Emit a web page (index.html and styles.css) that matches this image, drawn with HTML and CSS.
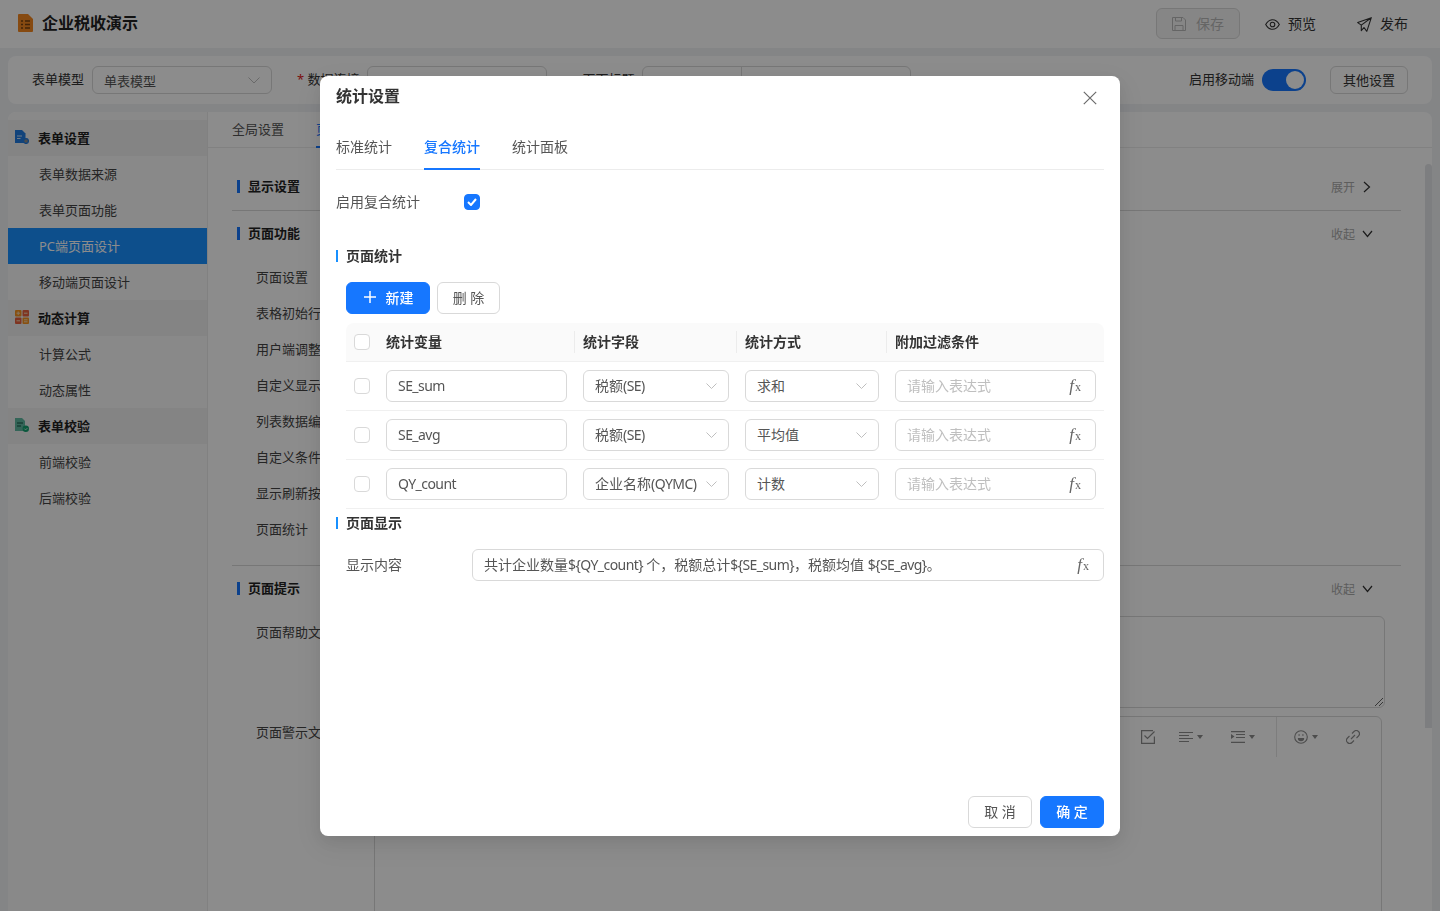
FILE: index.html
```html
<!DOCTYPE html>
<html lang="zh">
<head>
  <meta charset="UTF-8">
  <meta name="viewport" content="width=device-width, initial-scale=1.0">
  <title>企业税收演示</title>
  <link rel="stylesheet" href="styles.css">
</head>
<body>
  <header class="top-header">
    <div class="brand">
      <svg class="brand-icon" width="15" height="18" viewBox="0 0 15 18"><path d="M1 0h9l5 5v12a1 1 0 0 1-1 1H1a1 1 0 0 1-1-1V1a1 1 0 0 1 1-1z" fill="#f5871f"/><path d="M3 7h2M7 7h5M3 10.500h2M7 10.500h5M3 14h2M7 14h5" stroke="#7a430f" stroke-width="1.300"/></svg>
      <span>企业税收演示</span>
    </div>
    <div class="header-actions">
      <button class="save-btn" type="button">
        <svg width="14" height="14" viewBox="0 0 14 14" fill="none" stroke="currentColor" stroke-width="1"><path d="M.5.500h10.500l2.500 2.500v10.500H.5z"/><path d="M3.500.500v3.500h6V.500M3 13.500V8.500h8v5"/></svg>
        保存
      </button>
      <a class="header-link link-preview">
        <svg width="15" height="11" viewBox="0 0 15 11" fill="none" stroke="currentColor" stroke-width="1.100"><path d="M.7 5.500C2.500 2.200 4.800.7 7.500.7s5 1.500 6.800 4.800c-1.800 3.300-4.100 4.800-6.800 4.800S2.500 8.800.7 5.500z"/><circle cx="7.500" cy="5.500" r="2.300"/></svg>
        预览
      </a>
      <a class="header-link link-publish">
        <svg width="15" height="15" viewBox="0 0 15 15" fill="none" stroke="currentColor" stroke-width="1.100" stroke-linejoin="round"><path d="M14.300.7.700 5.600l3.600 2.500L14.300.7 9.800 14.300 7 10.500l-2.700 3.200V8.100"/></svg>
        发布
      </a>
    </div>
  </header>

  <div class="config-bar">
    <label class="bar-label">表单模型</label>
    <div class="bar-select select-model">单表模型<svg class="chev" width="12" height="7" viewBox="0 0 12 7"><path d="M.5.500 6 6 11.500.500" fill="none" stroke="currentColor"/></svg></div>
    <label class="bar-label label-conn"><i>*</i> 数据连接</label>
    <div class="bar-select select-conn"></div>
    <label class="bar-label label-title">页面标题</label>
    <div class="bar-select select-title-a"></div>
    <div class="bar-select select-title-b"></div>
    <div class="bar-right">
      <label class="bar-label">启用移动端</label>
      <span class="switch"><span class="knob"></span></span>
      <button class="other-btn" type="button">其他设置</button>
    </div>
  </div>

  <div class="workspace">
    <aside class="side-menu">
      <div class="menu-group">
        <svg width="14" height="14" viewBox="0 0 14 14"><path d="M0 0h7l3.500 3.500V13H0z" fill="#1f7ae0"/><path d="M2 6h5M2 8.500h3.500" stroke="#cfe2f7" stroke-width="1"/><circle cx="11" cy="11" r="2.400" fill="#8a8a8a" stroke="#1f7ae0" stroke-width="1.300"/></svg>
        表单设置
      </div>
      <div class="menu-item">表单数据来源</div>
      <div class="menu-item">表单页面功能</div>
      <div class="menu-item active">PC端页面设计</div>
      <div class="menu-item">移动端页面设计</div>
      <div class="menu-group">
        <svg width="14" height="14" viewBox="0 0 14 14"><rect width="6.500" height="6.500" rx="1" fill="#f7931e"/><rect x="7.500" width="6.500" height="6.500" rx="1" fill="#e8603c"/><rect y="7.500" width="6.500" height="6.500" rx="1" fill="#e8603c"/><rect x="7.500" y="7.500" width="6.500" height="6.500" rx="1" fill="#f7931e"/><path d="M1.500 3.200h3.500M3.200 1.500V5M9 3.200h3.500M1.500 10.800h3.500M9 9.800h3.500M9 11.800h3.500" stroke="#f3d9b5"/></svg>
        动态计算
      </div>
      <div class="menu-item">计算公式</div>
      <div class="menu-item">动态属性</div>
      <div class="menu-group">
        <svg width="14" height="14" viewBox="0 0 14 14"><path d="M0 0h7l3 3v10H0z" fill="#5fb8a0"/><path d="M2 5h6M2 8h4" stroke="#14503f" stroke-width="1"/><circle cx="10.800" cy="10.800" r="3.200" fill="#14a06f"/><path d="M9.300 10.600l1.300 1.300 1.800-1.800" fill="none" stroke="#bfe8d8"/></svg>
        表单校验
      </div>
      <div class="menu-item">前端校验</div>
      <div class="menu-item">后端校验</div>
    </aside>

    <main class="main-panel">
      <nav class="panel-tabs">
        <span class="panel-tab">全局设置</span>
        <span class="panel-tab current">页面设置</span>
      </nav>
      <div class="panel-scroll">
        <div class="panel-body">
          <section class="cfg-section">
            <div class="cfg-head">
              <span class="cfg-title">显示设置</span>
              <span class="cfg-toggle">展开<svg width="8" height="12" viewBox="0 0 8 12"><path d="M1 1l5.500 5L1 11" fill="none" stroke="currentColor" stroke-width="1.200"/></svg></span>
            </div>
          </section>
          <section class="cfg-section">
            <div class="cfg-head">
              <span class="cfg-title">页面功能</span>
              <span class="cfg-toggle open">收起<svg width="11" height="8" viewBox="0 0 11 8"><path d="M1 1l4.500 5.500L10 1" fill="none" stroke="currentColor" stroke-width="1.200"/></svg></span>
            </div>
            <div class="cfg-rows">
              <div class="cfg-row">页面设置</div>
              <div class="cfg-row">表格初始行</div>
              <div class="cfg-row">用户端调整</div>
              <div class="cfg-row">自定义显示</div>
              <div class="cfg-row">列表数据编</div>
              <div class="cfg-row">自定义条件</div>
              <div class="cfg-row">显示刷新按</div>
              <div class="cfg-row">页面统计</div>
            </div>
          </section>
          <section class="cfg-section last">
            <div class="cfg-head">
              <span class="cfg-title">页面提示</span>
              <span class="cfg-toggle open">收起<svg width="11" height="8" viewBox="0 0 11 8"><path d="M1 1l4.500 5.500L10 1" fill="none" stroke="currentColor" stroke-width="1.200"/></svg></span>
            </div>
            <div class="tip-row">
              <span class="tip-label">页面帮助文</span>
              <div class="tip-area">
                <svg class="resize-grip" width="8" height="8" viewBox="0 0 8 8"><path d="M0 8l8-8M4 8l4-4" stroke="#3c3c3c" stroke-width=".8"/></svg>
              </div>
            </div>
            <div class="tip-row">
              <span class="tip-label">页面警示文</span>
              <div class="editor">
                <div class="editor-tools">
                  <svg class="tool-check" width="14" height="14" viewBox="0 0 14 14" fill="none" stroke="currentColor" stroke-width="1.200"><path d="M13.400 6.500v6.900H.6V.6H12"/><path d="M3.500 5.500 6.500 8.500 13.500 1.500"/></svg>
                  <span class="tool">
                    <svg width="14" height="11" viewBox="0 0 14 11" stroke="currentColor"><path d="M0 .5h14M0 3.500h10M0 6.500h14M0 9.500h10"/></svg>
                    <i class="caret"></i>
                  </span>
                  <span class="tool">
                    <svg width="14" height="12" viewBox="0 0 14 12" stroke="currentColor" stroke-width="1.200"><path d="M0 .6h14M5 3.500h9M5 6.500h9M0 11.400h14"/><path d="M0 3l3.500 2.500L0 8z" fill="currentColor" stroke="none"/></svg>
                    <i class="caret"></i>
                  </span>
                  <span class="tool-sep"></span>
                  <span class="tool">
                    <svg width="14" height="14" viewBox="0 0 14 14" fill="none" stroke="currentColor" stroke-width="1.100"><circle cx="7" cy="7" r="6.300"/><path d="M3.800 8h6.400a3.200 3.200 0 0 1-6.400 0z" fill="currentColor" stroke="none"/><path d="M4.500 5h1.200M8.300 5h1.200" stroke-width="1.500"/></svg>
                    <i class="caret"></i>
                  </span>
                  <svg class="tool-link" width="14" height="14" viewBox="0 0 14 14" fill="none" stroke="currentColor" stroke-width="1.100"><path d="M6 3.500 8 1.500a2.600 2.600 0 0 1 4.500 4.500l-2 2M8 10.500l-2 2A2.600 2.600 0 0 1 1.500 8l2-2M5 9l4-4"/></svg>
                </div>
              </div>
            </div>
          </section>
        </div>
        <div class="scroll-track"><div class="scroll-thumb"></div></div>
      </div>
    </main>
  </div>

  <div class="mask">
    <div class="modal">
      <div class="modal-head">
        <h3>统计设置</h3>
        <svg class="modal-close" width="14" height="14" viewBox="0 0 14 14"><path d="M.8.8l12.400 12.400M13.200.8.800 13.200" stroke="#6b6b6b" stroke-width="1.200"/></svg>
      </div>
      <div class="modal-tabs">
        <span class="modal-tab">标准统计</span>
        <span class="modal-tab on">复合统计</span>
        <span class="modal-tab">统计面板</span>
      </div>
      <div class="enable-row">
        <span class="enable-label">启用复合统计</span>
        <span class="check on"><svg width="10" height="8" viewBox="0 0 10 8"><path d="M1 4l3 3 5-6" fill="none" stroke="#fff" stroke-width="2"/></svg></span>
      </div>
      <div class="sub-title sub-stat">页面统计</div>
      <div class="table-actions">
        <button class="btn primary new-btn" type="button">
          <svg width="12" height="12" viewBox="0 0 12 12"><path d="M6 0v12M0 6h12" stroke="#fff" stroke-width="1.500"/></svg>
          新建
        </button>
        <button class="btn del-btn" type="button">删 除</button>
      </div>
      <div class="stat-table">
        <div class="stat-row stat-headrow">
          <div class="cell"><span class="check"></span></div>
          <div class="cell head-cell">统计变量</div>
          <div class="cell head-cell">统计字段</div>
          <div class="cell head-cell">统计方式</div>
          <div class="cell head-cell">附加过滤条件</div>
        </div>
        <div class="stat-row">
          <div class="cell"><span class="check"></span></div>
          <div class="cell"><div class="field en">SE_sum</div></div>
          <div class="cell"><div class="field"><span>税额<span class="en">(SE)</span></span><svg class="arrow" width="11" height="6" viewBox="0 0 11 6"><path d="M.5.500l5 5 5-5" fill="none" stroke="#bfbfbf"/></svg></div></div>
          <div class="cell"><div class="field">求和<svg class="arrow" width="11" height="6" viewBox="0 0 11 6"><path d="M.5.500l5 5 5-5" fill="none" stroke="#bfbfbf"/></svg></div></div>
          <div class="cell"><div class="field holder">请输入表达式<span class="fx"><i>f</i>x</span></div></div>
        </div>
        <div class="stat-row">
          <div class="cell"><span class="check"></span></div>
          <div class="cell"><div class="field en">SE_avg</div></div>
          <div class="cell"><div class="field"><span>税额<span class="en">(SE)</span></span><svg class="arrow" width="11" height="6" viewBox="0 0 11 6"><path d="M.5.500l5 5 5-5" fill="none" stroke="#bfbfbf"/></svg></div></div>
          <div class="cell"><div class="field">平均值<svg class="arrow" width="11" height="6" viewBox="0 0 11 6"><path d="M.5.500l5 5 5-5" fill="none" stroke="#bfbfbf"/></svg></div></div>
          <div class="cell"><div class="field holder">请输入表达式<span class="fx"><i>f</i>x</span></div></div>
        </div>
        <div class="stat-row">
          <div class="cell"><span class="check"></span></div>
          <div class="cell"><div class="field en">QY_count</div></div>
          <div class="cell"><div class="field"><span>企业名称<span class="en">(QYMC)</span></span><svg class="arrow" width="11" height="6" viewBox="0 0 11 6"><path d="M.5.500l5 5 5-5" fill="none" stroke="#bfbfbf"/></svg></div></div>
          <div class="cell"><div class="field">计数<svg class="arrow" width="11" height="6" viewBox="0 0 11 6"><path d="M.5.500l5 5 5-5" fill="none" stroke="#bfbfbf"/></svg></div></div>
          <div class="cell"><div class="field holder">请输入表达式<span class="fx"><i>f</i>x</span></div></div>
        </div>
      </div>
      <div class="sub-title sub-show">页面显示</div>
      <div class="show-row">
        <span class="show-label">显示内容</span>
        <div class="field show-field"><span>共计企业数量<span class="en">${QY_count} </span>个，税额总计<span class="en">${SE_sum}</span>，税额均值 <span class="en">${SE_avg}</span>。</span><span class="fx"><i>f</i>x</span></div>
      </div>
      <div class="modal-foot">
        <button class="btn foot-btn" type="button">取 消</button>
        <button class="btn primary foot-btn" type="button">确 定</button>
      </div>
    </div>
  </div>
</body>
</html>
```

FILE: styles.css
```css
* {
  box-sizing: border-box;
}
html, body {
  height: 100%;
}
body {
  margin: 0;
  height: 911px;
  overflow: hidden;
  display: flex;
  flex-direction: column;
  background: #f0f2f5;
  color: #333;
  font-family: "Noto Sans", "Noto Sans CJK SC", sans-serif;
  font-size: 13px;
}
button {
  font-family: inherit;
}
.en {
  letter-spacing: -0.55px;
}

/* header */
.top-header {
  height: 48px;
  flex: none;
  background: #fff;
  display: flex;
  align-items: center;
  justify-content: space-between;
  padding: 0 32px 0 18px;
}
.brand {
  display: flex;
  align-items: center;
  gap: 9px;
  padding-bottom: 2px;
  font-size: 16px;
  font-weight: 700;
  color: #222;
}
.brand span {
  margin-bottom: 2px;
}
.header-actions {
  display: flex;
  align-items: center;
}
.save-btn {
  width: 84px;
  height: 31px;
  margin-top: -1px;
  padding: 0 0 1px;
  display: flex;
  align-items: center;
  justify-content: center;
  gap: 10px;
  border: 1px solid #d9d9d9;
  border-radius: 6px;
  background: #f5f5f5;
  color: #b8b8b8;
  font-size: 14px;
}
.save-btn svg {
  margin-top: 1px;
}
.header-link {
  display: flex;
  align-items: center;
  gap: 8px;
  padding-bottom: 2px;
  font-size: 14px;
  color: #333;
}
.header-link svg {
  margin-top: 2px;
}
.link-preview {
  margin-left: 25px;
}
.link-publish {
  margin-left: 41px;
}

/* top config bar */
.config-bar {
  height: 48px;
  flex: none;
  margin: 8px 8px 0;
  padding: 0 24px;
  background: #fff;
  border-radius: 8px;
  display: flex;
  align-items: center;
}
.bar-label {
  color: #333;
  line-height: 26px;
  padding-bottom: 2px;
}
.bar-label i {
  color: #e02020;
  font-style: normal;
}
.label-conn {
  margin-left: 25px;
}
.label-title {
  margin-left: 36px;
}
.bar-select {
  height: 28px;
  width: 180px;
  margin-left: 8px;
  padding: 0 11px;
  border: 1px solid #d9d9d9;
  border-radius: 6px;
  display: flex;
  align-items: center;
  justify-content: space-between;
  color: #555;
}
.select-conn {
  margin-left: 7px;
}
.select-title-a {
  width: 100px;
  margin-left: 7px;
  border-radius: 6px 0 0 6px;
}
.select-title-b {
  width: 170px;
  margin-left: -1px;
  border-radius: 0 6px 6px 0;
}
.chev {
  color: #bfbfbf;
}
.bar-right {
  margin-left: auto;
  display: flex;
  align-items: center;
}
.switch {
  width: 44px;
  height: 22px;
  margin-left: 8px;
  padding: 2px;
  border-radius: 11px;
  background: #1677ff;
  display: flex;
  justify-content: flex-end;
}
.knob {
  width: 18px;
  height: 18px;
  border-radius: 50%;
  background: #fff;
}
.other-btn {
  width: 78px;
  height: 28px;
  margin-left: 24px;
  border: 1px solid #d9d9d9;
  border-radius: 6px;
  background: #fff;
  color: #333;
  font-size: 13px;
  padding: 0 0 2px;
}

/* main area */
.workspace {
  flex: 1;
  min-height: 0;
  margin: 8px 8px 0;
  background: #fff;
  border-radius: 8px 8px 0 0;
  display: flex;
  overflow: hidden;
}
.side-menu {
  width: 200px;
  flex: none;
  padding-top: 8px;
  background: #fafafa;
  border-right: 1px solid #ececec;
}
.menu-group {
  height: 36px;
  padding: 0 0 2px 7px;
  background: #f0f0f0;
  display: flex;
  align-items: center;
  gap: 9px;
  font-weight: 700;
  color: #222;
}
.menu-item {
  height: 36px;
  padding-left: 31px;
  line-height: 36px;
  color: #444;
}
.menu-item.active {
  background: #1890ff;
  color: #fff;
}
.main-panel {
  flex: 1;
  min-width: 0;
  display: flex;
  flex-direction: column;
}
.panel-tabs {
  height: 36px;
  flex: none;
  padding-left: 24px;
  border-bottom: 1px solid #ececec;
  display: flex;
  gap: 32px;
}
.panel-tab {
  line-height: 35px;
  color: #555;
}
.panel-tab.current {
  color: #1677ff;
  border-bottom: 2px solid #1677ff;
  height: 36px;
}
.panel-scroll {
  flex: 1;
  min-height: 0;
  display: flex;
}
.panel-body {
  flex: 1;
  min-width: 0;
  padding: 15px 24px 0;
}
.scroll-track {
  width: 7px;
  flex: none;
  padding-top: 16px;
}
.scroll-thumb {
  height: 564px;
  border-radius: 4px 4px 0 0;
  background: #e4e5e9;
}
.cfg-section {
  border-bottom: 1px solid #d9d9d9;
}
.cfg-section.last {
  border-bottom: none;
}
.cfg-head {
  height: 47px;
  display: flex;
  align-items: center;
  justify-content: space-between;
  padding: 0 30px 0 5px;
}
.cfg-section + .cfg-section .cfg-head {
  height: 45px;
}
.cfg-title {
  height: 13px;
  padding-left: 8px;
  border-left: 3px solid #1677ff;
  line-height: 13px;
  font-weight: 700;
  color: #222;
}
.cfg-toggle {
  display: flex;
  align-items: center;
  gap: 8px;
  font-size: 12px;
  color: #aaa;
}
.cfg-toggle.open {
  gap: 7px;
  margin-right: -2px;
}
.cfg-toggle svg {
  color: #333;
}
.cfg-rows {
  padding: 3px 0 18px 24px;
}
.cfg-row {
  height: 36px;
  line-height: 36px;
  color: #444;
}
.tip-row {
  padding-left: 24px;
  display: flex;
  margin-top: 5px;
}
.tip-row + .tip-row {
  margin-top: 8px;
}
.tip-label {
  width: 118px;
  flex: none;
  padding-top: 6px;
  color: #444;
}
.tip-area {
  width: 1011px;
  height: 92px;
  border: 1px solid #d9d9d9;
  border-radius: 6px;
  display: flex;
  align-items: flex-end;
  justify-content: flex-end;
  padding: 0 1px 1px 0;
}
.resize-grip {
  display: block;
}
.editor {
  width: 1008px;
  height: 300px;
  border: 1px solid #d9d9d9;
  border-radius: 6px;
}
.editor-tools {
  height: 40px;
  display: flex;
  align-items: center;
  justify-content: flex-end;
  color: #8c8c8c;
  padding-right: 21px;
}
.tool {
  display: flex;
  align-items: center;
  gap: 4px;
}
.tool-check {
  margin-right: 24px;
}
.tool-check + .tool {
  margin-right: 28px;
}
.tool + .tool {
  margin-right: 21px;
}
.tool-sep {
  width: 1px;
  height: 40px;
  background: #e4e4e4;
  margin-right: 17px;
}
.tool-sep + .tool {
  margin-right: 28px;
}
.caret {
  width: 0;
  height: 0;
  border-left: 3px solid transparent;
  border-right: 3px solid transparent;
  border-top: 4px solid currentColor;
}

/* dialog */
.mask {
  position: fixed;
  inset: 0;
  background: rgba(0, 0, 0, 0.45);
  display: flex;
  justify-content: center;
  align-items: flex-start;
}
.modal {
  width: 800px;
  height: 760px;
  margin-top: 76px;
  padding: 0 16px 8px;
  background: #fff;
  border-radius: 8px;
  box-shadow: 0 6px 16px rgba(0, 0, 0, 0.08), 0 9px 28px 8px rgba(0, 0, 0, 0.05);
  display: flex;
  flex-direction: column;
  color: #555;
  font-size: 14px;
}
.modal-head {
  height: 38px;
  flex: none;
  display: flex;
  align-items: center;
  justify-content: space-between;
  padding-right: 7px;
}
.modal-head h3 {
  margin: 0;
  font-size: 16px;
  font-weight: 700;
  color: #333;
}
.modal-close {
  margin-top: 6px;
}
.modal-tabs {
  height: 56px;
  flex: none;
  display: flex;
  gap: 32px;
  border-bottom: 1px solid #ececec;
}
.modal-tab {
  height: 56px;
  padding-top: 22px;
  line-height: 22px;
}
.modal-tab.on {
  color: #1677ff;
  font-weight: 500;
  border-bottom: 2px solid #1677ff;
}
.enable-row {
  height: 32px;
  flex: none;
  margin-top: 16px;
  display: flex;
  align-items: center;
}
.enable-label {
  width: 128px;
  padding-bottom: 2px;
}
.check {
  width: 16px;
  height: 16px;
  flex: none;
  border: 1px solid #d9d9d9;
  border-radius: 4px;
  background: #fff;
  display: flex;
  align-items: center;
  justify-content: center;
}
.check.on {
  background: #1677ff;
  border-color: #1677ff;
}
.sub-title {
  flex: none;
  height: 12px;
  padding-left: 8px;
  border-left: 2px solid #1890ff;
  line-height: 11px;
  font-weight: 700;
  color: #333;
}
.sub-stat {
  margin-top: 32px;
}
.sub-show {
  margin-top: 8px;
}
.table-actions {
  flex: none;
  margin: 20px 0 9px 10px;
  display: flex;
  gap: 7px;
}
.btn {
  height: 32px;
  padding: 0 0 2px;
  border: 1px solid #d9d9d9;
  border-radius: 6px;
  background: #fff;
  color: #555;
  font-size: 14px;
  display: flex;
  align-items: center;
  justify-content: center;
}
.btn.primary {
  background: #1677ff;
  border-color: #1677ff;
  color: #fff;
  font-weight: 500;
}
.new-btn {
  width: 84px;
  gap: 10px;
  padding-left: 1px;
}
.del-btn {
  width: 63px;
}
.stat-table {
  flex: none;
  margin-left: 10px;
}
.stat-row {
  display: grid;
  grid-template-columns: 32px 197px 162px 150px 217px;
  height: 49px;
  border-bottom: 1px solid #f0f0f0;
}
.stat-headrow {
  height: 39px;
  background: #fafafa;
  border-radius: 8px 8px 0 0;
}
.cell {
  padding: 0 8px;
  display: flex;
  align-items: center;
  min-width: 0;
}
.head-cell {
  padding-bottom: 2px;
  font-weight: 700;
  color: #333;
  position: relative;
}
.head-cell + .head-cell::before {
  content: '';
  position: absolute;
  left: -1px;
  top: 8px;
  bottom: 8px;
  width: 1px;
  background: #ececec;
}
.field {
  width: 100%;
  height: 32px;
  padding: 0 11px 2px;
  border: 1px solid #d9d9d9;
  border-radius: 6px;
  background: #fff;
  display: flex;
  align-items: center;
  justify-content: space-between;
  color: #555;
  white-space: nowrap;
}
.arrow {
  flex: none;
  margin-top: 2px;
}
.holder {
  color: #bfbfbf;
}
.fx {
  font-family: "Liberation Serif", serif;
  font-size: 12px;
  color: #666;
  letter-spacing: 0;
  margin: 2px 3px 0 0;
}
.fx i {
  font-size: 17px;
  margin-right: 1px;
}
.show-row {
  flex: none;
  margin: 20px 0 0 10px;
  display: flex;
  align-items: center;
}
.show-label {
  width: 126px;
  flex: none;
  padding-bottom: 2px;
}
.show-field {
  flex: 1;
}
.modal-foot {
  margin-top: auto;
  display: flex;
  justify-content: flex-end;
  gap: 8px;
}
.foot-btn {
  width: 64px;
}
```
